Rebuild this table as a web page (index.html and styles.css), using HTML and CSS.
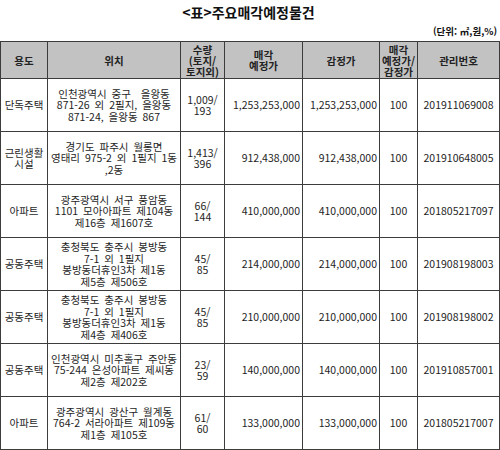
FILE: index.html
```html
<!DOCTYPE html>
<html lang="ko">
<head>
<meta charset="utf-8">
<title>주요매각예정물건</title>
<link rel="stylesheet" href="styles.css">
</head>
<body>
<div class="page">
  <div class="head">
    <h1 class="title">&lt;표&gt;주요매각예정물건</h1>
    <div class="unit">(단위: ㎡,원,%)</div>
  </div>
  <table class="grid">
    <colgroup>
      <col class="c-use"><col class="c-loc"><col class="c-qty"><col class="c-price"><col class="c-appr"><col class="c-ratio"><col class="c-no">
    </colgroup>
    <thead>
      <tr>
        <th>용도</th>
        <th>위치</th>
        <th>수량<br>(토지/<br>토지외)</th>
        <th>매각<br>예정가</th>
        <th>감정가</th>
        <th>매각<br>예정가/<br>감정가</th>
        <th>관리번호</th>
      </tr>
    </thead>
    <tbody>
      <tr>
        <td>단독주택</td>
        <td class="loc">인천광역시 중구 &nbsp;을왕동<br>871-26 외 2필지, 을왕동<br>871-24, 을왕동 867</td>
        <td>1,009/<br>193</td>
        <td class="num">1,253,253,000</td>
        <td class="num">1,253,253,000</td>
        <td>100</td>
        <td>201911069008</td>
      </tr>
      <tr>
        <td>근린생활<br>시설</td>
        <td class="loc">경기도 파주시 월롱면<br>영태리 975-2 외 1필지 1동<br>,2동</td>
        <td>1,413/<br>396</td>
        <td class="num">912,438,000</td>
        <td class="num">912,438,000</td>
        <td>100</td>
        <td>201910648005</td>
      </tr>
      <tr>
        <td>아파트</td>
        <td class="loc">광주광역시 서구 풍암동<br>1101 모아아파트 제104동<br>제16층 제1607호</td>
        <td>66/<br>144</td>
        <td class="num">410,000,000</td>
        <td class="num">410,000,000</td>
        <td>100</td>
        <td>201805217097</td>
      </tr>
      <tr>
        <td>공동주택</td>
        <td class="loc">충청북도 충주시 봉방동<br>7-1 외 1필지<br>봉방동더휴인3차 제1동<br>제5층 제506호</td>
        <td>45/<br>85</td>
        <td class="num">214,000,000</td>
        <td class="num">214,000,000</td>
        <td>100</td>
        <td>201908198003</td>
      </tr>
      <tr>
        <td>공동주택</td>
        <td class="loc">충청북도 충주시 봉방동<br>7-1 외 1필지<br>봉방동더휴인3차 제1동<br>제4층 제406호</td>
        <td>45/<br>85</td>
        <td class="num">210,000,000</td>
        <td class="num">210,000,000</td>
        <td>100</td>
        <td>201908198002</td>
      </tr>
      <tr>
        <td>공동주택</td>
        <td class="loc">인천광역시 미추홀구 주안동<br>75-244 은성아파트 제씨동<br>제2층 제202호</td>
        <td>23/<br>59</td>
        <td class="num">140,000,000</td>
        <td class="num">140,000,000</td>
        <td>100</td>
        <td>201910857001</td>
      </tr>
      <tr>
        <td>아파트</td>
        <td class="loc">광주광역시 광산구 월계동<br>764-2 서라아파트 제109동<br>제1층 제105호</td>
        <td>61/<br>60</td>
        <td class="num">133,000,000</td>
        <td class="num">133,000,000</td>
        <td>100</td>
        <td>201805217007</td>
      </tr>
      <tr class="cut">
        <td></td>
        <td></td>
        <td></td>
        <td></td>
        <td></td>
        <td></td>
        <td></td>
      </tr>
    </tbody>
  </table>
</div>
</body>
</html>
```

FILE: styles.css
```css
html, body {
  margin: 0;
  padding: 0;
  background: #ffffff;
}

body {
  width: 500px;
  height: 450px;
  overflow: hidden;
  font-family: "Noto Sans CJK KR", "Noto Sans", sans-serif;
  color: #1e1e1e;
}

.page {
  width: 500px;
  height: 450px;
  overflow: hidden;
}

.head {
  display: flex;
  flex-direction: column;
  padding: 4px 3px 4px 0;
}

.title {
  margin: 0;
  font-size: 14px;
  line-height: 16px;
  font-weight: 700;
  text-align: center;
  color: #111;
}

.unit {
  margin-top: 5px;
  font-size: 9.5px;
  line-height: 12px;
  font-weight: 700;
  text-align: right;
  color: #111;
}

.grid {
  width: 499px;
  table-layout: fixed;
  border-collapse: collapse;
  font-size: 10.5px;
  line-height: 11.5px;
}

.c-use { width: 47px; }
.c-loc { width: 133px; }
.c-qty { width: 44px; }
.c-price { width: 78px; }
.c-appr { width: 77px; }
.c-ratio { width: 38px; }
.c-no { width: 82px; }

.grid th,
.grid td {
  border: 1px solid #3c3c3c;
  padding: 0;
  text-align: center;
  vertical-align: middle;
  white-space: nowrap;
  overflow: hidden;
}

.grid thead tr {
  height: 37px;
}

.grid th {
  background: #c2c2c2;
  font-weight: 700;
  color: #222;
  line-height: 11px;
}

.grid tbody tr {
  height: 53px;
}

.grid tbody tr.cut {
  height: 20px;
}

.grid td.loc {
  word-spacing: 2px;
}

.grid td.num {
  text-align: right;
  padding-right: 2px;
}
```
